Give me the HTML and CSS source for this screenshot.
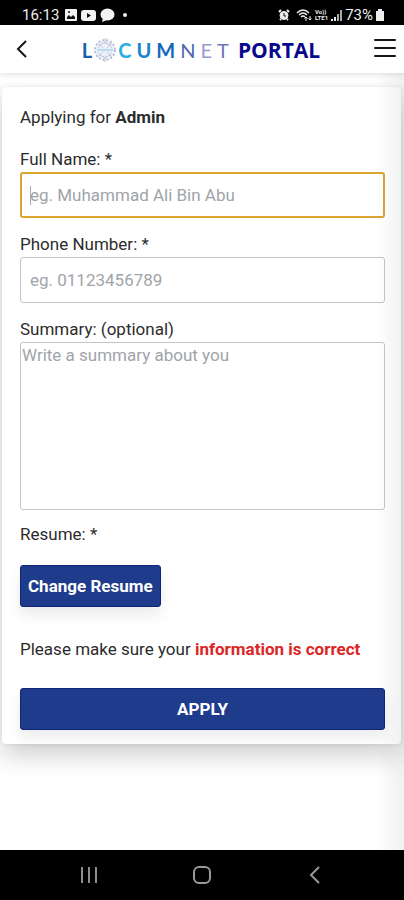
FILE: index.html
```html
<!DOCTYPE html>
<html lang="en">
<head>
<meta charset="utf-8">
<meta name="viewport" content="width=device-width, initial-scale=1">
<title>Locumnet Portal</title>
<link rel="stylesheet" href="styles.css">
</head>
<body>
<div class="statusbar">
  <div class="status-group">
    <span class="clock">16:13</span>
    <svg width="12" height="12" viewBox="0 0 12 12" aria-hidden="true"><rect width="12" height="12" rx="1" fill="#f2f2f2"/><path d="M2 10V8l2-2 2 2 2-2 2 2v2z" fill="#111"/><circle cx="4" cy="3" r="1" fill="#111"/></svg>
    <svg width="15" height="11" viewBox="0 0 15 11" aria-hidden="true"><rect width="15" height="11" rx="3" fill="#f2f2f2"/><path d="M6 3l4 2.500-4 2.500z" fill="#111"/></svg>
    <svg width="15" height="14" viewBox="0 0 15 14" aria-hidden="true"><ellipse cx="7.500" cy="6.500" rx="7" ry="6" fill="#f2f2f2"/><path d="M3 10l-1 4 5-2z" fill="#f2f2f2"/></svg>
    <span class="dot"></span>
  </div>
  <div class="status-group status-right">
    <svg width="12" height="12" viewBox="0 0 12 12" fill="none" stroke="#eee" aria-hidden="true"><circle cx="6" cy="6.500" r="4" fill="#eee"/><path d="M1 3l2-2M11 3L9 1M2 11l1-1M10 11L9 10" stroke-width="2"/><path d="M6 4v3h2" stroke="#111"/></svg>
    <svg class="wifi" width="16" height="14" viewBox="0 0 16 14" fill="none" stroke="#eee" stroke-width="1.500" aria-hidden="true"><path d="M1 5q6-6 12 0M3 7q4-4 8 0M5 9q2-2 4 0"/><path d="M10 13V9m-1.500 1.500L10 9l1.500 1.500M14 8v4m-1.500-1.500L14 12l1.500-1.500" stroke-width="1"/></svg>
    <span class="volte"><span>Vo))</span><span>LTE1</span></span>
    <svg width="11" height="11" viewBox="0 0 11 11" fill="#eee" aria-hidden="true"><path d="M0 9h2v2H0zM3 7h2v4H3z"/><path d="M6 4h2v7H6zM9 0h2v11H9z" fill="#aaa"/></svg>
    <span class="percent">73%</span>
    <svg width="8" height="12" viewBox="0 0 8 12" fill="#eee" aria-hidden="true"><path d="M2 0h4v2h2v10H0V2h2z"/></svg>
  </div>
</div>

<header class="appbar">
  <button class="icon-button" type="button" aria-label="Back">
    <svg width="12" height="18" viewBox="0 0 12 18" fill="none" stroke="#161616" stroke-width="2" aria-hidden="true"><path d="M10 1L2 9l8 8"/></svg>
  </button>
  <div class="brand">
    <span class="l">L</span>
    <svg class="emblem" width="24" height="26" viewBox="0 0 24 26" fill="none" aria-hidden="true">
      <circle cx="12" cy="13" r="10" fill="#eef1f7"/>
      <circle cx="12" cy="13" r="10" stroke="#b9bdd6" stroke-width="2" stroke-dasharray="2 2"/>
      <circle cx="12" cy="13" r="7" stroke="#bccbe3" stroke-dasharray="3 1"/>
      <path d="M5 6l14 14M19 6L5 20M12 1v5M12 20v5M6 9l6-4 6 4M6 17l6 4 6-4" stroke="#c6c8e0"/>
      <path d="M4 11h16v4H4z" fill="#e5f1fa"/>
      <path d="M4 13h16" stroke="#98c2e4"/>
    </svg>
    <span class="c">C</span><span class="u">U</span><span class="m">M</span><span class="n">N</span><span class="e">E</span><span class="t">T</span>
    <span class="portal">PORTAL</span>
  </div>
  <button class="icon-button" type="button" aria-label="Menu">
    <svg width="22" height="20" viewBox="0 0 22 20" stroke="#161616" stroke-width="2" stroke-linecap="round" aria-hidden="true"><path d="M1 1h20M1 9h20M1 17h20"/></svg>
  </button>
</header>

<main class="page">
  <form class="card">
    <p class="intro">Applying for <strong>Admin</strong></p>
    <div class="field">
      <label for="name">Full Name: *</label>
      <input class="control focused" id="name" type="text" placeholder="eg. Muhammad Ali Bin Abu">
      <span class="caret"></span>
    </div>
    <div class="field">
      <label for="phone">Phone Number: *</label>
      <input class="control" id="phone" type="tel" placeholder="eg. 01123456789">
    </div>
    <div class="field">
      <label for="summary">Summary: (optional)</label>
      <textarea class="control summary" id="summary" placeholder="Write a summary about you"></textarea>
    </div>
    <p class="resume">Resume: *</p>
    <button class="button" type="button">Change Resume</button>
    <p class="notice">Please make sure your <strong>information is correct</strong></p>
    <button class="button apply" type="submit">APPLY</button>
  </form>
  <div class="edge-shade"></div>
</main>

<nav class="navbar" aria-label="System">
  <button class="icon-button" type="button" aria-label="Recent apps">
    <svg width="18" height="18" viewBox="0 0 18 18" stroke="#8c8c8c" stroke-width="2" aria-hidden="true"><path d="M2 1v16M9 1v16M16 1v16"/></svg>
  </button>
  <button class="icon-button" type="button" aria-label="Home">
    <svg width="18" height="18" viewBox="0 0 18 18" fill="none" stroke="#999" stroke-width="2" aria-hidden="true"><rect x="1" y="1" width="16" height="16" rx="5"/></svg>
  </button>
  <button class="icon-button" type="button" aria-label="Back">
    <svg width="18" height="18" viewBox="0 0 18 18" fill="none" stroke="#999" stroke-width="2" aria-hidden="true"><path d="M13 1L5 9l8 8"/></svg>
  </button>
</nav>
</body>
</html>
```
FILE: styles.css
```css
* {
  box-sizing: border-box;
}

body {
  margin: 0;
  min-height: 100vh;
  display: flex;
  flex-direction: column;
  background: #fff;
  color: #2c2c2c;
  font-family: Roboto, "Liberation Sans", sans-serif;
  font-size: 17px;
  line-height: 24px;
}

p {
  margin: 0;
}

.statusbar {
  display: flex;
  justify-content: space-between;
  height: 25px;
  padding: 5px 20px 0 22px;
  background: #000;
  color: #eee;
}

.status-group {
  display: flex;
  align-items: center;
  gap: 4px;
  height: 20px;
}

.status-right {
  gap: 3px;
}

.clock,
.percent {
  font-size: 15px;
  line-height: 20px;
}

.clock {
  margin-right: 2px;
}

.wifi {
  margin-left: 3px;
}

.dot {
  width: 4px;
  height: 4px;
  margin-left: 4px;
  border-radius: 50%;
  background: #eee;
}

.volte {
  display: flex;
  flex-direction: column;
  font-size: 6px;
  font-weight: 700;
  line-height: 6px;
}

.appbar {
  position: relative;
  display: flex;
  align-items: center;
  justify-content: space-between;
  height: 48px;
  padding: 0 8px 0 16px;
  background: #fff;
  box-shadow: 0 1px 6px rgba(0, 0, 0, 0.15);
}

.icon-button {
  display: flex;
  padding: 0;
  border: 0;
  background: none;
}

.brand {
  display: flex;
  align-items: center;
  gap: 5px;
  padding-top: 2px;
  font-family: Lato, "Open Sans", sans-serif;
  font-size: 20px;
  font-weight: 700;
}

.emblem {
  margin: 0 -4px;
}

.l {
  color: #1762ae;
}

.c {
  color: #25afe2;
}

.u {
  color: #1783ca;
}

.m {
  color: #1767bd;
}

.n {
  color: #4d68b1;
  font-weight: 400;
}

.e {
  color: #969bcb;
  font-weight: 400;
}

.t {
  color: #6c76b5;
  font-weight: 400;
}

.portal {
  margin-left: 4px;
  color: #08088c;
  font-family: "Open Sans", sans-serif;
  font-size: 21px;
}

.page {
  position: relative;
  flex: 1;
  padding: 14px 3px 32px 2px;
}

.card {
  padding: 18px 16px 14px 18px;
  border-radius: 4px;
  background: #fff;
  box-shadow: 0 0 4px rgba(0, 0, 0, 0.08), 0 12px 24px rgba(0, 0, 0, 0.18);
}

.intro {
  margin-bottom: 18px;
}

.field {
  position: relative;
  display: flex;
  flex-direction: column;
  gap: 1px;
  margin-bottom: 14px;
}

.control {
  width: 100%;
  height: 46px;
  padding: 0 9px;
  border: 1px solid #c4c6c9;
  border-radius: 3px;
  background: transparent;
  color: #222;
  font: inherit;
}

.control::placeholder {
  color: #a0a4a9;
  opacity: 1;
}

.focused {
  border: 2px solid #dba531;
  padding: 0 8px;
}

.caret {
  position: absolute;
  left: 10px;
  bottom: 13px;
  width: 1px;
  height: 19px;
  background: #aaa;
}

.summary {
  height: 168px;
  padding: 0 1px;
  resize: none;
}

.resume {
  margin-bottom: 21px;
  line-height: 20px;
}

.button {
  display: block;
  height: 42px;
  padding: 0 7px;
  border: 1px solid #102579;
  border-radius: 3px;
  background: #1f3b8b;
  box-shadow: 0 8px 14px rgba(0, 0, 0, 0.08);
  color: #fff;
  font: inherit;
  font-weight: 700;
}

.notice {
  margin: 30px 0 27px;
}

.notice strong {
  color: #dc2626;
}

.apply {
  width: 100%;
}

.edge-shade {
  position: absolute;
  top: 0;
  right: 0;
  bottom: 0;
  width: 28px;
  background: linear-gradient(to right, rgba(0, 0, 0, 0), rgba(0, 0, 0, 0.06));
  pointer-events: none;
}

.navbar {
  position: relative;
  display: grid;
  grid-template-columns: repeat(3, 113px);
  justify-content: center;
  justify-items: center;
  align-items: center;
  height: 50px;
  background: #000;
}
```
